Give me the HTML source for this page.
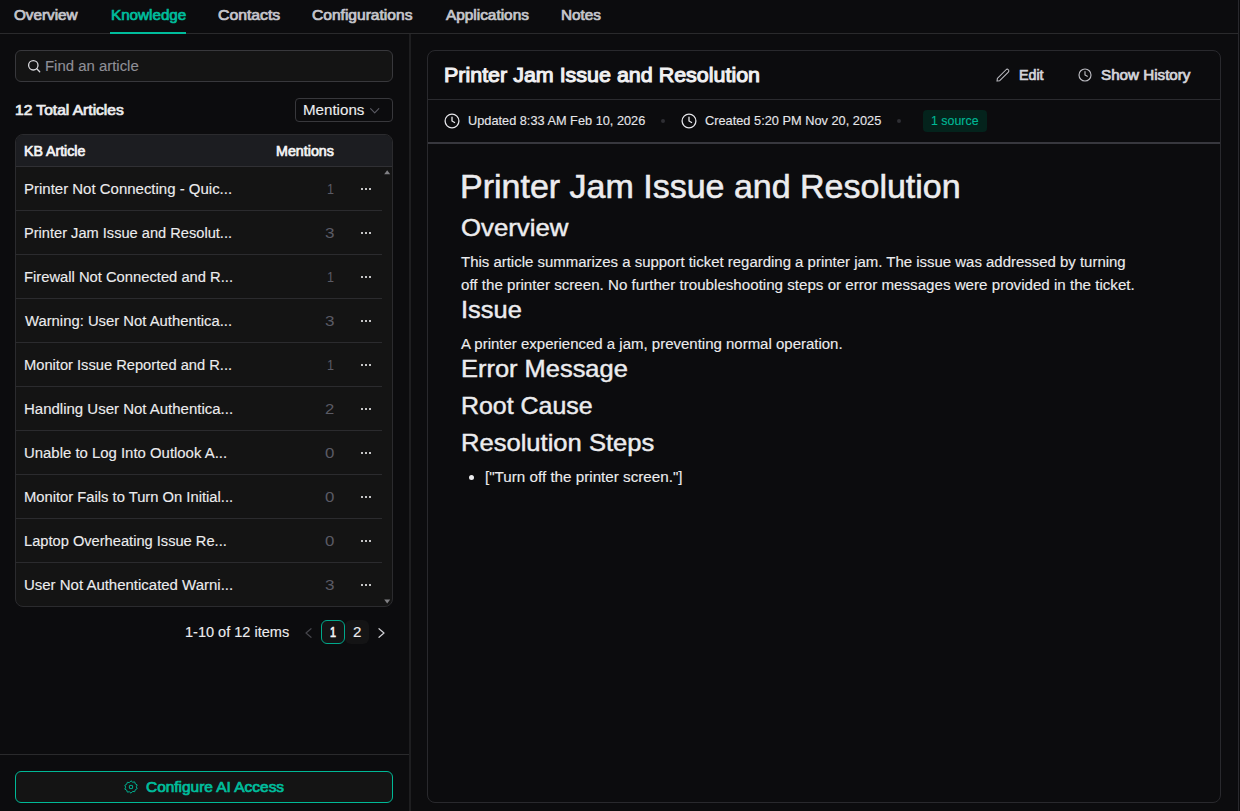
<!DOCTYPE html>
<html lang="en">
<head>
<meta charset="utf-8">
<title>Knowledge</title>
<style>
*{box-sizing:border-box;margin:0;padding:0}
html,body{width:1240px;height:811px;overflow:hidden;background:#0c0c0e}
body{font-family:"Liberation Sans",sans-serif;color:#ececee;position:relative}
.t{position:absolute;white-space:nowrap;line-height:normal;transform-origin:0 0;display:block}
.b{position:absolute}
svg{position:absolute;overflow:visible}
.row{position:absolute;left:16px;width:366px;height:1px;background:#2b2b2e}
.dots{position:absolute;left:360px;width:12px;height:3px}
.dots i{position:absolute;top:0;width:2.300px;height:2.300px;background:#e8e8ea;border-radius:0.800px}
</style>
</head>
<body>
<!-- outer frame -->
<div class="b" style="left:1238px;top:0;width:1px;height:811px;background:#29292d"></div>
<!-- tabs -->
<div class="b" style="left:0;top:33px;width:1238px;height:1px;background:#2a2a2c"></div>
<div class="b" style="left:110px;top:32px;width:76px;height:2px;background:#00bd9c"></div>
<!-- left panel -->
<div class="b" style="left:409px;top:34px;width:2px;height:777px;background:#1e1e20"></div>
<div class="b" style="left:15px;top:50px;width:378px;height:32px;border:1px solid #38383c;border-radius:6px;background:#141414"></div>
<svg style="left:27px;top:59px" width="14" height="14" viewBox="0 0 14 14" fill="none" stroke="#d8d8dc" stroke-width="1.3" stroke-linecap="round"><circle cx="6.300" cy="6.300" r="4.700"/><path d="M9.800 9.800L12.700 12.700"/></svg>
<div class="b" style="left:295px;top:98px;width:98px;height:24px;border:1px solid #38383c;border-radius:4px"></div>
<svg style="left:369.5px;top:107.5px" width="10" height="6" viewBox="0 0 10 6" fill="none" stroke="#5a5a62" stroke-width="1.1" stroke-linecap="round" stroke-linejoin="round"><path d="M0.6 0.6L4.7 4.9L8.8 0.6"/></svg>
<!-- table -->
<div class="b" style="left:15px;top:134px;width:378px;height:473px;border:1px solid #2b2b2e;border-radius:8px;background:#141414;overflow:hidden">
<div class="b" style="left:0;top:0;width:376px;height:31px;background:#1c1d21"></div>
<div class="b" style="left:0;top:31px;width:376px;height:1px;background:#303034"></div>
</div>
<div class="row" style="top:210px"></div>
<div class="row" style="top:254px"></div>
<div class="row" style="top:298px"></div>
<div class="row" style="top:342px"></div>
<div class="row" style="top:386px"></div>
<div class="row" style="top:430px"></div>
<div class="row" style="top:474px"></div>
<div class="row" style="top:518px"></div>
<div class="row" style="top:562px"></div>
<div class="dots" style="top:187.7px"><i style="left:0.600px"></i><i style="left:4.800px"></i><i style="left:9px"></i></div>
<div class="dots" style="top:231.7px"><i style="left:0.600px"></i><i style="left:4.800px"></i><i style="left:9px"></i></div>
<div class="dots" style="top:275.7px"><i style="left:0.600px"></i><i style="left:4.800px"></i><i style="left:9px"></i></div>
<div class="dots" style="top:319.7px"><i style="left:0.600px"></i><i style="left:4.800px"></i><i style="left:9px"></i></div>
<div class="dots" style="top:363.7px"><i style="left:0.600px"></i><i style="left:4.800px"></i><i style="left:9px"></i></div>
<div class="dots" style="top:407.7px"><i style="left:0.600px"></i><i style="left:4.800px"></i><i style="left:9px"></i></div>
<div class="dots" style="top:451.7px"><i style="left:0.600px"></i><i style="left:4.800px"></i><i style="left:9px"></i></div>
<div class="dots" style="top:495.7px"><i style="left:0.600px"></i><i style="left:4.800px"></i><i style="left:9px"></i></div>
<div class="dots" style="top:539.7px"><i style="left:0.600px"></i><i style="left:4.800px"></i><i style="left:9px"></i></div>
<div class="dots" style="top:583.7px"><i style="left:0.600px"></i><i style="left:4.800px"></i><i style="left:9px"></i></div>
<svg style="left:383.800px;top:169.600px" width="6.400" height="4.600" viewBox="0 0 7 5"><path d="M3.5 0.2L6.800 4.600H0.200Z" fill="#808084"/></svg>
<svg style="left:383.800px;top:599.400px" width="6.400" height="4.600" viewBox="0 0 7 5"><path d="M3.500 4.800L6.800 0.400H0.200Z" fill="#808084"/></svg>
<!-- pagination -->
<svg style="left:304.800px;top:628px" width="7" height="10" viewBox="0 0 7 10" fill="none" stroke="#46464c" stroke-width="1.200" stroke-linecap="round" stroke-linejoin="round"><path d="M6 0.700L1 5L6 9.300"/></svg>
<div class="b" style="left:321px;top:620px;width:24px;height:24px;border:1px solid #00a88b;border-radius:6px;background:#141415"></div>
<div class="b" style="left:345px;top:620px;width:24px;height:24px;border-radius:6px;background:#141415"></div>
<svg style="left:378px;top:628px" width="7" height="10" viewBox="0 0 7 10" fill="none" stroke="#d0d0d4" stroke-width="1.200" stroke-linecap="round" stroke-linejoin="round"><path d="M1 0.700L6 5L1 9.300"/></svg>
<!-- bottom -->
<div class="b" style="left:0;top:754px;width:409px;height:1px;background:#2a2a2c"></div>
<div class="b" style="left:15px;top:771px;width:378px;height:32px;border:1px solid #00b896;border-radius:6px;background:#141414"></div>
<svg style="left:124px;top:780px" width="14" height="14" viewBox="0 0 14 14" fill="none" stroke="#00ae8f" stroke-width="1" stroke-linejoin="round"><path d="M7 0.8l1.6 1.4 2.1-.3.6 2 1.9 1-.9 1.9.9 1.9-1.9 1-.6 2-2.1-.3L7 13.2l-1.6-1.4-2.1.3-.6-2-1.9-1 .9-1.9-.9-1.9 1.9-1 .6-2 2.1.3z"/><rect x="5.4" y="5.4" width="3.2" height="3.2" rx="0.6"/></svg>
<!-- card -->
<div class="b" style="left:427px;top:50px;width:794px;height:753px;border:1px solid #29292d;border-radius:8px"></div>
<div class="b" style="left:428px;top:99px;width:792px;height:1px;background:#2b2b2f"></div>
<div class="b" style="left:428px;top:142px;width:792px;height:2px;background:#38383e"></div>
<!-- header icons -->
<svg style="left:995px;top:67px" width="16" height="16" viewBox="0 0 16 16" fill="none" stroke="#bcbcc2" stroke-width="1.050" stroke-linejoin="round"><g transform="translate(7.800 8.300) rotate(-45)"><path d="M-6 -1.650H6.200a1.650 1.650 0 0 1 0 3.300H-6L-8.200 0Z"/></g></svg>
<svg style="left:1078px;top:68px" width="14" height="14" viewBox="0 0 14 14" fill="none" stroke="#bcbcc2" stroke-width="1.150" stroke-linecap="round" stroke-linejoin="round"><circle cx="7" cy="7" r="6"/><path d="M7 3.600V7l2.300 1.300"/></svg>
<svg style="left:444px;top:113px" width="16" height="16" viewBox="0 0 16 16" fill="none" stroke="#e6e6ea" stroke-width="1.3" stroke-linecap="round" stroke-linejoin="round"><circle cx="8" cy="8" r="6.900"/><path d="M8 4.200V8l2.600 1.500"/></svg>
<svg style="left:681px;top:113px" width="16" height="16" viewBox="0 0 16 16" fill="none" stroke="#e6e6ea" stroke-width="1.3" stroke-linecap="round" stroke-linejoin="round"><circle cx="8" cy="8" r="6.900"/><path d="M8 4.200V8l2.600 1.500"/></svg>
<div class="b" style="left:661px;top:119px;width:4px;height:4px;border-radius:2px;background:#2f2f33"></div>
<div class="b" style="left:897px;top:119px;width:4px;height:4px;border-radius:2px;background:#2f2f33"></div>
<div class="b" style="left:923px;top:110px;width:64px;height:22px;border-radius:4px;background:#04231c"></div>
<!-- bullet -->
<div class="b" style="left:469px;top:475px;width:5px;height:5px;border-radius:3px;background:#ececee"></div>
<span id="tab1" class="t" style="left:14.00px;top:7.00px;font-size:14px;font-weight:400;color:#c6c6cc;transform:scaleX(1.0889);-webkit-text-stroke:0.70px #c6c6cc">Overview</span>
<span id="tab2" class="t" style="left:111.00px;top:7.00px;font-size:14px;font-weight:400;color:#00bd9c;transform:scaleX(1.0862);-webkit-text-stroke:0.70px #00bd9c">Knowledge</span>
<span id="tab3" class="t" style="left:218.00px;top:7.00px;font-size:14px;font-weight:400;color:#c6c6cc;transform:scaleX(1.1267);-webkit-text-stroke:0.70px #c6c6cc">Contacts</span>
<span id="tab4" class="t" style="left:312.00px;top:7.00px;font-size:14px;font-weight:400;color:#c6c6cc;transform:scaleX(1.1124);-webkit-text-stroke:0.70px #c6c6cc">Configurations</span>
<span id="tab5" class="t" style="left:446.00px;top:7.00px;font-size:14px;font-weight:400;color:#c6c6cc;transform:scaleX(1.0979);-webkit-text-stroke:0.70px #c6c6cc">Applications</span>
<span id="tab6" class="t" style="left:561.00px;top:7.00px;font-size:14px;font-weight:400;color:#c6c6cc;transform:scaleX(1.0931);-webkit-text-stroke:0.70px #c6c6cc">Notes</span>
<span id="srch" class="t" style="left:45.00px;top:58.00px;font-size:14px;font-weight:400;color:#8f8f97;transform:scaleX(1.0660);-webkit-text-stroke:0.12px #8f8f97">Find an article</span>
<span id="total" class="t" style="left:15.00px;top:102.00px;font-size:14px;font-weight:400;color:#ececee;transform:scaleX(1.1123);-webkit-text-stroke:0.70px #ececee">12 Total Articles</span>
<span id="sort" class="t" style="left:303.00px;top:102.00px;font-size:14px;font-weight:400;color:#ececee;transform:scaleX(1.0801);-webkit-text-stroke:0.12px #ececee">Mentions</span>
<span id="th1" class="t" style="left:24.00px;top:143.00px;font-size:14px;font-weight:400;color:#f4f4f6;transform:scaleX(1.0107);-webkit-text-stroke:0.70px #f4f4f6">KB Article</span>
<span id="th2" class="t" style="left:276.00px;top:143.00px;font-size:14px;font-weight:400;color:#f4f4f6;transform:scaleX(1.0189);-webkit-text-stroke:0.70px #f4f4f6">Mentions</span>
<span id="r0" class="t" style="left:24.00px;top:181.00px;font-size:14px;font-weight:400;color:#ececee;transform:scaleX(1.0698);-webkit-text-stroke:0.12px #ececee">Printer Not Connecting - Quic...</span>
<span id="n0" class="t" style="left:327.00px;top:181.00px;font-size:14px;font-weight:400;color:#5a5a64;transform:scaleX(0.8987)">1</span>
<span id="r1" class="t" style="left:24.00px;top:225.00px;font-size:14px;font-weight:400;color:#ececee;transform:scaleX(1.0443);-webkit-text-stroke:0.12px #ececee">Printer Jam Issue and Resolut...</span>
<span id="n1" class="t" style="left:325.00px;top:225.00px;font-size:14px;font-weight:400;color:#5a5a64;transform:scaleX(1.2186)">3</span>
<span id="r2" class="t" style="left:24.00px;top:269.00px;font-size:14px;font-weight:400;color:#ececee;transform:scaleX(1.0536);-webkit-text-stroke:0.12px #ececee">Firewall Not Connected and R...</span>
<span id="n2" class="t" style="left:327.00px;top:269.00px;font-size:14px;font-weight:400;color:#5a5a64;transform:scaleX(0.8987)">1</span>
<span id="r3" class="t" style="left:25.00px;top:313.00px;font-size:14px;font-weight:400;color:#ececee;transform:scaleX(1.0587);-webkit-text-stroke:0.12px #ececee">Warning: User Not Authentica...</span>
<span id="n3" class="t" style="left:325.00px;top:313.00px;font-size:14px;font-weight:400;color:#5a5a64;transform:scaleX(1.2186)">3</span>
<span id="r4" class="t" style="left:24.00px;top:357.00px;font-size:14px;font-weight:400;color:#ececee;transform:scaleX(1.0485);-webkit-text-stroke:0.12px #ececee">Monitor Issue Reported and R...</span>
<span id="n4" class="t" style="left:327.00px;top:357.00px;font-size:14px;font-weight:400;color:#5a5a64;transform:scaleX(0.8987)">1</span>
<span id="r5" class="t" style="left:24.00px;top:401.00px;font-size:14px;font-weight:400;color:#ececee;transform:scaleX(1.0705);-webkit-text-stroke:0.12px #ececee">Handling User Not Authentica...</span>
<span id="n5" class="t" style="left:325.00px;top:401.00px;font-size:14px;font-weight:400;color:#5a5a64;transform:scaleX(1.1894)">2</span>
<span id="r6" class="t" style="left:24.00px;top:445.00px;font-size:14px;font-weight:400;color:#ececee;transform:scaleX(1.0649);-webkit-text-stroke:0.12px #ececee">Unable to Log Into Outlook A...</span>
<span id="n6" class="t" style="left:325.00px;top:445.00px;font-size:14px;font-weight:400;color:#5a5a64;transform:scaleX(1.2042)">0</span>
<span id="r7" class="t" style="left:24.00px;top:489.00px;font-size:14px;font-weight:400;color:#ececee;transform:scaleX(1.0539);-webkit-text-stroke:0.12px #ececee">Monitor Fails to Turn On Initial...</span>
<span id="n7" class="t" style="left:325.00px;top:489.00px;font-size:14px;font-weight:400;color:#5a5a64;transform:scaleX(1.2042)">0</span>
<span id="r8" class="t" style="left:24.00px;top:533.00px;font-size:14px;font-weight:400;color:#ececee;transform:scaleX(1.0464);-webkit-text-stroke:0.12px #ececee">Laptop Overheating Issue Re...</span>
<span id="n8" class="t" style="left:325.00px;top:533.00px;font-size:14px;font-weight:400;color:#5a5a64;transform:scaleX(1.2042)">0</span>
<span id="r9" class="t" style="left:24.00px;top:577.00px;font-size:14px;font-weight:400;color:#ececee;transform:scaleX(1.0693);-webkit-text-stroke:0.12px #ececee">User Not Authenticated Warni...</span>
<span id="n9" class="t" style="left:325.00px;top:577.00px;font-size:14px;font-weight:400;color:#5a5a64;transform:scaleX(1.2186)">3</span>
<span id="pag" class="t" style="left:185.00px;top:624.00px;font-size:14px;font-weight:400;color:#ececee;transform:scaleX(1.0376);-webkit-text-stroke:0.12px #ececee">1-10 of 12 items</span>
<span id="pg1" class="t" style="left:330.00px;top:624.00px;font-size:14px;font-weight:400;color:#f4f4f6;transform:scaleX(0.7758);-webkit-text-stroke:0.70px #f4f4f6">1</span>
<span id="pg2" class="t" style="left:353.00px;top:624.00px;font-size:14px;font-weight:400;color:#ececee;transform:scaleX(1.0782);-webkit-text-stroke:0.12px #ececee">2</span>
<span id="cfg" class="t" style="left:146.00px;top:779.00px;font-size:14px;font-weight:400;color:#00bd9c;transform:scaleX(1.1019);-webkit-text-stroke:0.70px #00bd9c">Configure AI Access</span>
<span id="ctitle" class="t" style="left:444.00px;top:63.00px;font-size:21px;font-weight:400;color:#f0f0f2;transform:scaleX(1.0217);-webkit-text-stroke:1.05px #f0f0f2">Printer Jam Issue and Resolution</span>
<span id="edit" class="t" style="left:1019.00px;top:67.00px;font-size:14px;font-weight:400;color:#d4d4da;transform:scaleX(1.0169);-webkit-text-stroke:0.70px #d4d4da">Edit</span>
<span id="hist" class="t" style="left:1101.00px;top:67.00px;font-size:14px;font-weight:400;color:#d4d4da;transform:scaleX(1.0845);-webkit-text-stroke:0.70px #d4d4da">Show History</span>
<span id="upd" class="t" style="left:468.00px;top:113.00px;font-size:13px;font-weight:400;color:#e6e6ea;transform:scaleX(0.9812);-webkit-text-stroke:0.12px #e6e6ea">Updated 8:33 AM Feb 10, 2026</span>
<span id="crt" class="t" style="left:705.00px;top:113.00px;font-size:13px;font-weight:400;color:#e6e6ea;transform:scaleX(0.9834);-webkit-text-stroke:0.12px #e6e6ea">Created 5:20 PM Nov 20, 2025</span>
<span id="src" class="t" style="left:931.00px;top:113.00px;font-size:13px;font-weight:400;color:#00b896;transform:scaleX(0.9532);-webkit-text-stroke:0.12px #00b896">1 source</span>
<h1 id="h1" class="t" style="left:460.00px;top:168.00px;font-size:33px;font-weight:400;color:#ececee;transform:scaleX(1.0300);-webkit-text-stroke:0.55px #ececee">Printer Jam Issue and Resolution</h1>
<h2 id="h2a" class="t" style="left:461.00px;top:214.00px;font-size:24px;font-weight:400;color:#ececee;transform:scaleX(1.0735);-webkit-text-stroke:0.45px #ececee">Overview</h2>
<p id="p1" class="t" style="left:461.00px;top:254.00px;font-size:14px;font-weight:400;color:#ececee;transform:scaleX(1.0682);-webkit-text-stroke:0.12px #ececee">This article summarizes a support ticket regarding a printer jam. The issue was addressed by turning</p>
<p id="p2" class="t" style="left:461.00px;top:277.00px;font-size:14px;font-weight:400;color:#ececee;transform:scaleX(1.0814);-webkit-text-stroke:0.12px #ececee">off the printer screen. No further troubleshooting steps or error messages were provided in the ticket.</p>
<h2 id="h2b" class="t" style="left:461.00px;top:296.00px;font-size:24px;font-weight:400;color:#ececee;transform:scaleX(1.0598);-webkit-text-stroke:0.45px #ececee">Issue</h2>
<p id="p3" class="t" style="left:461.00px;top:336.00px;font-size:14px;font-weight:400;color:#ececee;transform:scaleX(1.0707);-webkit-text-stroke:0.12px #ececee">A printer experienced a jam, preventing normal operation.</p>
<h2 id="h2c" class="t" style="left:461.00px;top:355.00px;font-size:24px;font-weight:400;color:#ececee;transform:scaleX(1.0598);-webkit-text-stroke:0.45px #ececee">Error Message</h2>
<h2 id="h2d" class="t" style="left:461.00px;top:392.00px;font-size:24px;font-weight:400;color:#ececee;transform:scaleX(1.0384);-webkit-text-stroke:0.45px #ececee">Root Cause</h2>
<h2 id="h2e" class="t" style="left:461.00px;top:429.00px;font-size:24px;font-weight:400;color:#ececee;transform:scaleX(1.0653);-webkit-text-stroke:0.45px #ececee">Resolution Steps</h2>
<span id="li" class="t" style="left:485.00px;top:469.00px;font-size:14px;font-weight:400;color:#ececee;transform:scaleX(1.0859);-webkit-text-stroke:0.12px #ececee">[&quot;Turn off the printer screen.&quot;]</span>
</body>
</html>
